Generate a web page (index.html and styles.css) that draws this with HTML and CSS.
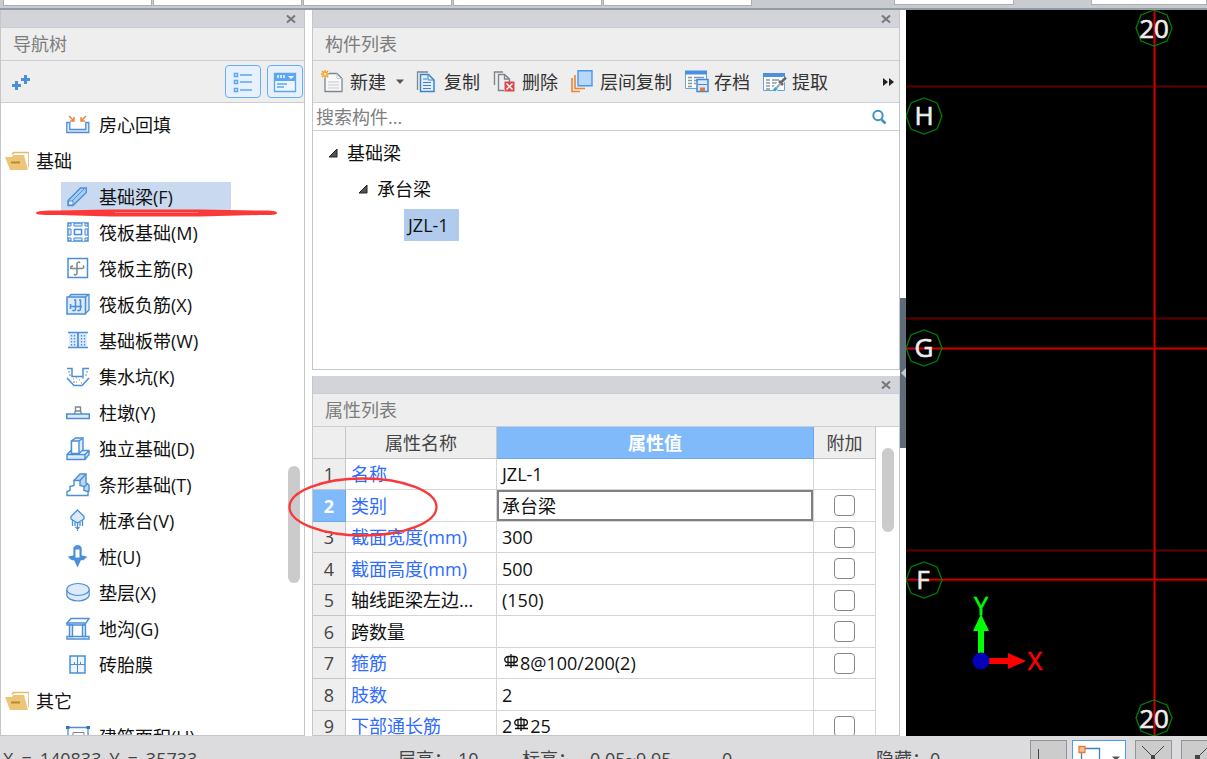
FILE: index.html
```html
<!DOCTYPE html>
<html lang="zh-CN">
<head>
<meta charset="utf-8">
<title>构件定义</title>
<link rel="stylesheet" href="styles.css">
</head>
<body>
<div class="app">
  <div class="tabstrip">
    <div class="tab"></div><div class="tab"></div><div class="tab"></div><div class="tab"></div><div class="tab"></div>
    <div class="tab tab-detached"></div>
    <div class="tab tab-last"></div>
  </div>

  <main class="workspace">
    <section class="panel nav">
      <div class="grip"><button class="close" aria-label="关闭导航树"><svg width="10" height="10" viewBox="0 0 10 10"><path d="M1 1.500L9 8.500M9 1.500L1 8.500"/></svg></button></div>
      <h2 class="title">导航树</h2>
      <div class="nav-tools">
        <button class="plain" aria-label="展开"><svg width="20" height="18" viewBox="0 0 20 18"><path d="M5.500 8v9M1 12.500h9M14.500 2v9M10 6.500h9" stroke="#4a8fd8" stroke-width="3" fill="none"/></svg></button>
        <div class="nav-modes">
          <button class="mode" aria-label="列表视图"><svg width="24" height="24" viewBox="0 0 24 24" fill="none" stroke="#5ba6f5"><path d="M3.500 3.500h3v3h-3zM3.500 10.500h3v3h-3zM3.500 18.500h3v3h-3z" stroke-width="1.500"/><path d="M9 5h12M9 12h12M9 20h12" stroke-width="1.700"/></svg></button>
          <button class="mode" aria-label="窗口视图"><svg width="24" height="24" viewBox="0 0 24 24"><path d="M1.500 3.500h21v18h-21z" fill="#edf5fe" stroke="#5ba6f5" stroke-width="1.300"/><path d="M1 3h22v8H1z" fill="#5ba6f5"/><path d="M5 5v3M8 5v3M11 5v3" stroke="#fff" stroke-width="1.500"/><path d="M15 6h6l-3 3z" fill="#fff"/><path d="M4 14h10M4 17h7" stroke="#5ba6f5" stroke-width="1.500"/></svg></button>
        </div>
      </div>
      <ul class="tree">
        <li><button class="node"><svg class="ico" viewBox="0 0 24 24"><path d="M.8 9.500h3v7h16v-7h3v10H.8z" fill="#dceafa" stroke="#4a8fd8" stroke-width="1.300"/><path d="M3 3l5 5M8 4v4H4M20 3l-5 5M15 4v4h4" stroke="#ef8340" fill="none" stroke-width="1.500"/></svg>房心回填</button></li>
        <li><button class="folder"><svg class="ico" viewBox="0 0 24 24"><path d="M7 5l2-1.500h15v15" fill="none" stroke="#e3bb6a" stroke-width="1.600"/><path d="M0 8h7l1-2h11l4 15H5z" fill="#eec577"/><path d="M6 13.500h9" stroke="#b58c35" stroke-width="2"/></svg>基础</button></li>
        <li><button class="node active"><svg class="ico" viewBox="0 0 24 24"><path d="M2 15.500L14.500 3h5.800v4.500L7 20.500H2z" fill="#a9cdf3" stroke="#4a8fd8" stroke-width="1.400"/><path d="M2.500 16H7v4H2.500z" fill="#e3effb" stroke="#4a8fd8"/><path d="M6 16L18 4" stroke="#4a8fd8" fill="none"/></svg>基础梁(F)</button></li>
        <li><button class="node"><svg class="ico" viewBox="0 0 24 24" fill="none" stroke="#4a8fd8"><path d="M2 2h20v18H2z" fill="#dceafa" stroke-width="1.500"/><path d="M6.500 2v18M17.500 2v18M2 6.500h20M2 15.500h20" stroke="#fff" stroke-width="2"/><path d="M5 2v3H2M19 2v3h3M5 20v-3H2M19 20v-3h3M8 2v3h8V2M8 20v-3h8v3M2 8h3v6H2M22 8h-3v6h3"/><path d="M8.500 8.500h7v5h-7z" fill="#fff" stroke-width="1.500"/></svg>筏板基础(M)</button></li>
        <li><button class="node"><svg class="ico" viewBox="0 0 24 24" fill="none"><path d="M2 1.500h19.500v19H2z" stroke="#4a8fd8" stroke-width="1.500"/><path d="M14 6c-1-1.600-3-1-3 1v9c0 2-2 2.500-3 1M5 12c-1-2 0-3 2-3M5 11.500h10c3 0 3.500-1.500 2-3" stroke="#7c8790" stroke-width="1.500"/></svg>筏板主筋(R)</button></li>
        <li><button class="node"><svg class="ico" viewBox="0 0 24 24" fill="#dceafa" stroke="#4a8fd8"><path d="M3 4l2-2.500h18V17l-3 3" stroke-width="1.300"/><path d="M1 4h18.500v17H1zM19.500 4l3-2.500" stroke-width="1.500"/><path d="M4 13.500h12M8 7h1.500v9c0 2-2 2-3 1M13 7h1.500v9c0 2-2 2-3 1M4.500 11v5" fill="none" stroke-width="1.500"/></svg>筏板负筋(X)</button></li>
        <li><button class="node"><svg class="ico" viewBox="0 0 24 24"><path d="M3 3h18v15H3z" fill="#dceafa"/><path d="M2 3.500h20M2 18.500h20M12 3v15" stroke="#4a8fd8" stroke-width="1.700"/><path d="M5.500 6v11M8.500 6v11M15.500 6v11M18.500 6v11" stroke="#4a8fd8" stroke-dasharray="1.500 1.500" stroke-width="1.300"/></svg>基础板带(W)</button></li>
        <li><button class="node"><svg class="ico" viewBox="0 0 24 24" fill="none"><path d="M1 3.500h5v8h11v-8h6M1 13l7 7.500h8l7-7.500" stroke="#4a8fd8" stroke-width="1.500"/><path d="M2 7h2M3 10h2M7 14h1M10 13h1M13 15h1M16 13h2M10 17h1M15 18h1M19 10h2M20 7h2M7 17h2" stroke="#7c8790"/></svg>集水坑(K)</button></li>
        <li><button class="node"><svg class="ico" viewBox="0 0 24 24" fill="#fff"><path d="M8.500 13l1-3V6h5v4l1 3M9 10h6" stroke="#7c8790" stroke-width="1.400"/><path d="M.8 13h22.500v4.500H.8z" fill="#dceafa" stroke="#4a8fd8" stroke-width="1.500"/></svg>柱墩(Y)</button></li>
        <li><button class="node"><svg class="ico" viewBox="0 0 24 24" fill="#dceafa" stroke="#4a8fd8" stroke-width="1.400"><path d="M1 17.500l4-4h18v4l-4 5H1zM1 17.500h18l4-4M19 17.500v5"/><path d="M5.500 4l4-3H17v12l-4 3.500H5.500z"/><path d="M5.500 4H13v12.500H5.500zM13 4l4-3" fill="#fff"/></svg>独立基础(D)</button></li>
        <li><button class="node"><svg class="ico" viewBox="0 0 24 24" stroke="#4a8fd8" stroke-width="1.400"><path d="M8 7.500L14 1h6v9l3 2v6l-4 4z" fill="#bdd5f0"/><path d="M1 22.500v-4l3-1v-4l4-1v-5h6v5l4 1v4l4 1v4z" fill="#fff"/><path d="M14 7.500L20 1M18 14l4-4" fill="none"/></svg>条形基础(T)</button></li>
        <li><button class="node"><svg class="ico" viewBox="0 0 24 24" fill="#dceafa" stroke="#4a8fd8" stroke-width="1.300"><path d="M11.500 1L18 7.500v2.500l-6.500 4L5 10V7.500z"/><path d="M6.500 11v6M16.500 11v6M9 13v4M14 13v4M11.500 14v8M9.500 18l2 2 2-2" fill="none"/></svg>桩承台(V)</button></li>
        <li><button class="node"><svg class="ico" viewBox="0 0 24 24" stroke="#4a8fd8" stroke-width="1.300"><path d="M8 3h7v8l5 1-3 2.500h-2.500l-3 6.500-3-6.500H6L3 12l5-1z" fill="#4a8fd8"/><path d="M8.500 3c0-3 6-3 6 0z" fill="#6fa8e4"/><path d="M9.500 4.500h4v8h-4z" fill="#fff" stroke="none"/></svg>桩(U)</button></li>
        <li><button class="node"><svg class="ico" viewBox="0 0 24 24" fill="#dceafa" stroke="#4a8fd8" stroke-width="1.200"><path d="M.8 9v5c0 3 5 6 11.200 6s11.200-3 11.200-6V9"/><ellipse cx="12" cy="8.500" rx="11.200" ry="6"/></svg>垫层(X)</button></li>
        <li><button class="node"><svg class="ico" viewBox="0 0 24 24" fill="#fff" stroke="#4a8fd8" stroke-width="1.400"><path d="M1 6l4-4.500h18L20 6zM1 6h18v2H1zM1 19.500h22V22H1z"/><path d="M3.500 8h3v11.500h-3zM16.500 8h3v11.500h-3z" fill="#dceafa"/></svg>地沟(G)</button></li>
        <li><button class="node"><svg class="ico" viewBox="0 0 24 24" fill="#eef5fd" stroke="#4a8fd8"><path d="M4 3h15v17H4z" stroke-width="1.500"/><path d="M11.500 3v17M4 11.500h15M8.500 9v3M14.500 9v3"/></svg>砖胎膜</button></li>
        <li><button class="folder"><svg class="ico" viewBox="0 0 24 24"><path d="M7 5l2-1.500h15v15" fill="none" stroke="#e3bb6a" stroke-width="1.600"/><path d="M0 8h7l1-2h11l4 15H5z" fill="#eec577"/><path d="M6 13.500h9" stroke="#b58c35" stroke-width="2"/></svg>其它</button></li>
        <li><button class="node"><svg class="ico" viewBox="0 0 24 24" fill="none"><path d="M2 1v22M22 1v22M1 2.500h22" stroke="#4a8fd8" stroke-width="1.300"/><path d="M0 1h3.500v3H0zM20.500 1H24v3h-3.500z" fill="#3c72ad"/><path d="M7 7.500h11v9H7z" stroke="#7c8790"/></svg>建筑面积(U)</button></li>
      </ul>
      <div class="thumb thumb-nav"></div>
    </section>

    <div class="center">
      <section class="panel">
        <div class="grip"><button class="close" aria-label="关闭构件列表"><svg width="10" height="10" viewBox="0 0 10 10"><path d="M1 1.500L9 8.500M9 1.500L1 8.500"/></svg></button></div>
        <h2 class="title">构件列表</h2>
        <div class="toolbar">
          <button class="tool tool-menu"><svg class="ico" viewBox="0 0 24 24"><path d="M4 3.500h12l5 5v13H4z" fill="#f8f8f8" stroke="#7c8790" stroke-width="1.300"/><path d="M16 3.500v5h5M7 12h11M7 15h11M7 18h11" stroke="#c5cbd1" fill="none"/><path d="M0 0h8v8H0z" fill="#eee"/><path d="M4 0v8M0 4h8M1 1l6 6M7 1L1 7" stroke="#f59b23" stroke-width="1.500"/><circle cx="4" cy="4" r="1.500" fill="#fff1b0"/></svg>新建<svg width="14" height="8" viewBox="0 0 14 8"><path d="M5 1.500h8l-4 4.500z" fill="#555"/></svg></button>
          <button class="tool"><svg class="ico" viewBox="0 0 24 24" fill="none"><path d="M2.500 20V2H13" stroke="#7c8790" stroke-width="1.300"/><path d="M5.500 4.500h8l5.500 5.500v11.500H5.500z" fill="#e5f0fc" stroke="#3d82d2" stroke-width="1.500"/><path d="M13 4.500V10h6M8 9h4M8 12.500h8M8 15.500h8M8 18.500h8" stroke="#3d82d2"/></svg>复制</button>
          <button class="tool"><svg class="ico" viewBox="0 0 24 24" fill="none"><path d="M1.500 15V2H10M11 20.500H5.500v-16h6l5 4.500v3M11.500 4.500V9h5" stroke="#7c8790" stroke-width="1.400"/><path d="M11.500 11.500h10v10h-10z" fill="#d9494d"/><path d="M13.500 13.500l6 6M19.500 13.500l-6 6" stroke="#fff" stroke-width="1.400"/></svg>删除</button>
          <button class="tool"><svg class="ico" viewBox="0 0 24 24" fill="none"><path d="M1 8v13.500h8M4 5v13.500h10" stroke="#ee8335" stroke-width="1.600"/><path d="M7 .8h14v15H7z" fill="#b8d8fa" stroke="#4a96ea" stroke-width="1.400"/></svg>层间复制</button>
          <button class="tool"><svg class="ico" viewBox="0 0 24 24" fill="none"><path d="M.5 1.500h21v17H.5z" fill="#fafcfe" stroke="#6aa1de"/><path d="M0 .5h22v4H0z" fill="#4a8fe0"/><path d="M3 7.500h4M9 7.500h10M3 10.500h4M9 10.500h3M3 13.500h4M9 13.500h2M3 16.500h4" stroke="#8c969f" stroke-width="1.300"/><path d="M12 9.500h11v12H12z" fill="#d9eafc" stroke="#3f88da" stroke-width="1.500"/><path d="M13 14.500h9" stroke="#3f88da"/><path d="M15 17.500h5v3.500h-5z" fill="#ee7529"/></svg>存档</button>
          <button class="tool"><svg class="ico" viewBox="0 0 24 24" fill="none"><path d="M.5 3.500h21v17H.5z" fill="#fafcfe" stroke="#6aa1de"/><path d="M0 3h22v4H0z" fill="#4a8fe0"/><path d="M3 10h4M9 10h7M3 13h4M9 13h5M3 16h4M9 16h3M3 19h4" stroke="#8c969f" stroke-width="1.300"/><path d="M22 8l-6 6M11 20l6-7" stroke="#fff" stroke-width="5"/><path d="M23 7.500l-5 5M16 11l4 4" stroke="#666" stroke-width="2.500"/><path d="M17.500 13.500l-5 5.500" stroke="#9ab" stroke-width="2"/><path d="M13.500 18L11 20.500" stroke="#20b4cc" stroke-width="3"/></svg>提取</button>
          <button class="plain more" aria-label="更多"><svg width="12" height="10" viewBox="0 0 12 10"><path d="M0 1l5 4-5 4zM6 1l5 4-5 4z" fill="#222"/></svg></button>
        </div>
        <div class="search">
          <input type="text" placeholder="搜索构件..." aria-label="搜索构件">
          <button class="plain" aria-label="搜索"><svg width="16" height="16" viewBox="0 0 16 16" fill="none" stroke="#4593c4"><circle cx="7" cy="6.500" r="4.700" stroke-width="2"/><path d="M10.500 10.500l4 4" stroke-width="2.600"/></svg></button>
        </div>
        <ul class="parts">
          <li class="part level1"><svg width="10" height="10" viewBox="0 0 10 10"><path d="M9 1v8H1z" fill="#555" stroke="#222"/></svg>基础梁</li>
          <li class="part level2"><svg width="10" height="10" viewBox="0 0 10 10"><path d="M9 1v8H1z" fill="#555" stroke="#222"/></svg>承台梁</li>
          <li class="part level3"><span class="picked">JZL-1</span></li>
        </ul>
      </section>

      <section class="panel">
        <div class="grip"><button class="close" aria-label="关闭属性列表"><svg width="10" height="10" viewBox="0 0 10 10"><path d="M1 1.500L9 8.500M9 1.500L1 8.500"/></svg></button></div>
        <h2 class="title">属性列表</h2>
        <div class="props-wrap">
          <table class="props">
            <colgroup><col class="c-num"><col class="c-name"><col><col class="c-add"></colgroup>
            <thead><tr><th></th><th>属性名称</th><th class="hot">属性值</th><th>附加</th></tr></thead>
            <tbody>
              <tr><th>1</th><td class="key">名称</td><td>JZL-1</td><td></td></tr>
              <tr><th class="hot">2</th><td class="key">类别</td><td class="editing">承台梁</td><td class="tick"><input type="checkbox" aria-label="附加 类别"></td></tr>
              <tr><th>3</th><td class="key">截面宽度(mm)</td><td>300</td><td class="tick"><input type="checkbox" aria-label="附加 截面宽度"></td></tr>
              <tr><th>4</th><td class="key">截面高度(mm)</td><td>500</td><td class="tick"><input type="checkbox" aria-label="附加 截面高度"></td></tr>
              <tr><th>5</th><td>轴线距梁左边...</td><td>(150)</td><td class="tick"><input type="checkbox" aria-label="附加 轴线距梁左边"></td></tr>
              <tr><th>6</th><td>跨数量</td><td></td><td class="tick"><input type="checkbox" aria-label="附加 跨数量"></td></tr>
              <tr><th>7</th><td class="key">箍筋</td><td><svg class="rebar" viewBox="0 0 18 16"><path d="M9 0v14M6 3v8M12 3v8M3 11.500h13M6.500 2.500h5.500c4.500 0 4.500 6 0 6H6.500c-5 0-5-6 0-6"/></svg>8@100/200(2)</td><td class="tick"><input type="checkbox" aria-label="附加 箍筋"></td></tr>
              <tr><th>8</th><td class="key">肢数</td><td>2</td><td></td></tr>
              <tr><th>9</th><td class="key">下部通长筋</td><td>2<svg class="rebar" viewBox="0 0 18 16"><path d="M9 0v14M6 3v8M12 3v8M3 11.500h13M6.500 2.500h5.500c4.500 0 4.500 6 0 6H6.500c-5 0-5-6 0-6"/></svg>25</td><td class="tick"><input type="checkbox" aria-label="附加 下部通长筋"></td></tr>
            </tbody>
          </table>
          <div class="thumb thumb-props"></div>
        </div>
      </section>
    </div>

    <div class="splitter"><button class="handle" aria-label="收起面板"><svg width="6" height="10" viewBox="0 0 6 10"><path d="M6 0v10L1 5z" fill="#c3c9ce"/></svg></button></div>

    <svg class="canvas" role="img" aria-label="轴网">
      <defs><path id="bubble" d="M0-18L13-13 18 0 13 13 0 18-13 13-18 0-13-13z"/></defs>
      <g class="axis-dim"><path d="M0 76.500h3000M0 308.500h3000M0 540.500h3000"/></g>
      <g class="axis-halo"><path d="M0 338.500h3000M0 570h3000M248.500 0v726"/></g>
      <g class="axis"><path d="M0 338.500h3000M0 569.500h3000M248.500 0v726"/></g>
      <g class="bubbles">
        <use href="#bubble" x="248" y="18"/><use href="#bubble" x="18" y="106"/><use href="#bubble" x="18" y="338"/><use href="#bubble" x="18" y="570"/><use href="#bubble" x="248" y="708"/>
      </g>
      <g class="axis-names">
        <text x="248" y="28">20</text><text x="18" y="115">H</text><text x="18" y="347">G</text><text x="17" y="579">F</text><text x="248" y="718">20</text>
      </g>
      <path d="M72 646v-25h-5l8-17 8 17h-5v25z" fill="#0f0"/>
      <path d="M82 648h20v-5l18 8-18 8v-5H82z" fill="#f00"/>
      <circle cx="75" cy="651" r="8.500" fill="#0000b8"/>
      <text class="ucs" x="75" y="605" fill="#0f0" stroke="#0f0">Y</text>
      <text class="ucs" x="129" y="660" fill="#f00" stroke="#f00">X</text>
    </svg>
  </main>

  <footer class="status">
    <div class="readout coords"><span>X</span><span>=</span><span>140833</span><span>Y</span><span>=</span><span>35733</span></div>
    <div class="readout height"><span>层高：</span><span>10</span></div>
    <div class="readout level"><span>标高：</span><span>0.05~9.95</span></div>
    <div class="readout count"><span>0</span></div>
    <div class="readout hidden-count"><span>隐藏：</span><span>0</span></div>
    <div class="snaps">
      <button class="snap" aria-label="正交"><svg width="35" height="34" viewBox="0 0 35 34"><path d="M7.500 8v20h20" fill="none" stroke="#444"/></svg></button>
      <button class="snap snap-on" aria-label="捕捉"><svg width="52" height="34" viewBox="0 0 52 34"><path d="M8.500 7.500h18v18h-18z" fill="none" stroke="#3d82d2" stroke-width="1.300"/><path d="M6 5.500h6v6H6z" fill="#f9bd90" stroke="#e67f35" stroke-width="1.300"/><path d="M39 15.500h8l-4 4z" fill="#555"/></svg></button>
      <button class="snap" aria-label="交点"><svg width="35" height="34" viewBox="0 0 35 34"><path d="M6 5l22 22M28 5L6 27" stroke="#444"/><path d="M15 14h4v4h-4z" fill="#444"/></svg></button>
      <button class="snap" aria-label="垂点"><svg width="35" height="34" viewBox="0 0 35 34"><path d="M28 4L6 26" stroke="#444"/><path d="M13 14h5v5h-5z" fill="#444"/></svg></button>
    </div>
  </footer>

  <svg class="markup" aria-hidden="true">
    <path d="M36 213C36 211 44 210.500 60 210.500L110 209.500H200L260 210.500C272 210.500 277 211 277 213S272 215 260 215L200 216.500H110L60 215C44 215 36 215 36 213z" fill="#fb3838"/>
    <path d="M115 212.500h83" stroke="#ff7474"/>
    <ellipse cx="363" cy="507" rx="73.500" ry="28.500" fill="none" stroke="#fb3838" stroke-width="2.300"/>
  </svg>
</div>
</body>
</html>
```
FILE: styles.css
```css
* { box-sizing: border-box; }

body {
  margin: 0;
  font: 18px/24px "Open Sans", "Noto Sans CJK SC", sans-serif;
  color: #111;
  background: #fff;
}

button {
  margin: 0;
  padding: 0;
  border: 0;
  background: none;
  font: inherit;
  color: inherit;
  text-align: left;
}

svg { display: block; flex: none; }
ul { list-style: none; margin: 0; padding: 0; }

.app {
  position: relative;
  display: flex;
  flex-direction: column;
  height: 100vh;
  overflow: hidden;
}

/* Tab strip */
.tabstrip {
  display: flex;
  flex: none;
  align-items: flex-start;
  gap: 1px;
  height: 10px;
  padding-left: 3px;
  background: #c8cbd0;
  border-bottom: 2px solid #929ba3;
}
.tab {
  flex: none;
  width: 149px;
  height: 6px;
  background: #fff;
  border: solid #aeaeb0;
  border-width: 0 1px 1px;
}
.tab-detached { width: 120px; height: 5px; margin-left: 141px; }
.tab-last { flex: 1; height: 5px; margin-left: 76px; }

.workspace { display: flex; flex: 1; min-height: 0; }

/* Panels */
.panel {
  position: relative;
  display: flex;
  flex: 1;
  flex-direction: column;
  min-height: 0;
  border: 1px solid #c3c6ca;
  border-top: 0;
  background: #fff;
}
.grip {
  display: flex;
  flex: none;
  align-items: center;
  justify-content: flex-end;
  height: 18px;
  padding: 1px 8px 0 0;
  background: #d3d4d9;
  border-bottom: 1px solid #cbcdd2;
}
.close svg { fill: none; stroke: #777; stroke-width: 2; }
.title {
  flex: none;
  height: 33px;
  margin: 0;
  padding: 4px 12px;
  font-size: 18px;
  font-weight: 400;
  color: #7c7c7c;
  background: #eee;
  border-bottom: 1px solid #cbced4;
}
.ico { width: 24px; height: 24px; }
.thumb { position: absolute; width: 12px; border-radius: 6px; background: #cbcbcb; }

/* Navigation tree */
.nav { flex: none; width: 305px; margin-right: 7px; }
.nav-tools {
  display: flex;
  flex: none;
  align-items: center;
  justify-content: space-between;
  height: 42px;
  padding: 0 1px 0 10px;
  background: #eee;
  border-bottom: 1px solid #cbced4;
}
.nav-modes { display: flex; gap: 6px; }
.mode {
  display: grid;
  place-items: center;
  width: 36px;
  height: 33px;
  border: 1px solid #66aef8;
  border-radius: 4px;
  background: #e6f1fd;
}
.tree { flex: 1; min-height: 0; padding-top: 4px; overflow: hidden; }
.tree li { display: flex; align-items: center; height: 36px; }
.node, .folder { display: flex; align-items: center; height: 30px; }
.node { gap: 9px; width: 170px; margin-left: 60px; padding-left: 5px; white-space: nowrap; }
.folder { gap: 7px; margin-left: 4px; }
.active { background: #c8d9f0; }
.thumb-nav { top: 456px; right: 4px; height: 117px; }

/* Component list */
.center { display: flex; flex: 0 1 588px; flex-direction: column; gap: 6px; min-width: 0; }
.toolbar {
  display: flex;
  flex: none;
  align-items: center;
  gap: 10px;
  height: 42px;
  padding: 0 4px 0 8px;
  background: #eee;
  border-bottom: 1px solid #cbced4;
  color: #333;
}
.tool { display: flex; flex: none; align-items: center; gap: 5px; padding-right: 3px; }
.tool-menu { padding-right: 0; }
.more { margin-left: auto; }
.search {
  display: flex;
  flex: none;
  align-items: center;
  height: 28px;
  padding: 0 12px 0 3px;
  border-bottom: 1px solid #cbced4;
}
.search input {
  flex: 1;
  min-width: 0;
  padding: 0;
  border: 0;
  outline: 0;
  font: inherit;
}
.search input::placeholder { color: #808080; opacity: 1; }
.parts { padding-top: 4px; }
.part { display: flex; align-items: center; gap: 9px; height: 36px; }
.level1 { padding-left: 15px; }
.level2 { padding-left: 45px; }
.level3 { padding-left: 91px; }
.picked { min-width: 55px; padding: 4px; background: #b1cbec; }

/* Property table */
.props-wrap { position: relative; flex: 1; min-height: 0; overflow: hidden; padding-right: 23px; }
.props {
  width: 100%;
  table-layout: fixed;
  border-collapse: separate;
  border-spacing: 0;
}
.c-num { width: 33px; }
.c-name { width: 151px; }
.c-add { width: 62px; }
.props tr { height: 31px; }
.props tbody tr:nth-child(4n+2), .props thead tr { height: 32px; }
.props tbody tr:nth-child(4n) { height: 32px; }
.props th, .props td {
  padding: 0 5px;
  line-height: 24px;
  white-space: nowrap;
  overflow: hidden;
  border: solid #d4d4d4;
  border-width: 0 1px 1px 0;
}
.props th {
  padding: 0;
  font-weight: 400;
  color: #444;
  background: #eee;
  border-color: #c6c6c6;
}
.props .key { color: #2e6bff; }
.props .hot { color: #fff; font-weight: 700; background: #80bafa; border-color: #6ba9ee; }
.props .editing { box-shadow: inset 0 0 0 2px #808080; }
.props .tick { padding: 0; text-align: center; }
.tick input {
  appearance: none;
  display: block;
  width: 21px;
  height: 21px;
  margin: 0 auto;
  border: 1px solid #888;
  border-radius: 4px;
  background: #fff;
}
.rebar {
  display: inline-block;
  width: 18px;
  height: 16px;
  vertical-align: 0;
  fill: none;
  stroke: #111;
  stroke-width: 1.3;
}
.thumb-props { top: 21px; right: 5px; height: 84px; }

/* Splitter */
.splitter { display: flex; flex: none; align-items: center; width: 6px; }
.handle { display: grid; place-items: center; width: 6px; height: 150px; background: #5f6b76; }

/* Drawing area */
.canvas { flex: 1 1 0; width: 0; min-width: 0; height: 100%; background: #000; }
.axis-dim { stroke: #5c0000; stroke-width: 2; }
.axis-halo { stroke: #700000; stroke-width: 3; }
.axis { stroke: #d00000; stroke-width: 1; }
.bubbles { fill: none; stroke: #008000; stroke-width: 1.3; }
.axis-names { font-size: 26px; fill: #eee; stroke: #eee; stroke-width: 0.6; text-anchor: middle; }
.ucs { font-size: 25px; stroke-width: 0.6; text-anchor: middle; }

/* Status bar */
.status {
  display: flex;
  flex: none;
  align-items: flex-start;
  height: 23px;
  overflow: hidden;
  background: #dcdcde;
  color: #444;
}
.readout { display: flex; flex: none; padding-top: 11px; white-space: nowrap; }
.coords { gap: 8px; width: 398px; padding-left: 3px; }
.height { gap: 6px; width: 124px; }
.level { gap: 14px; width: 200px; }
.count { width: 154px; }
.hidden-count { flex: 1; }
.snaps { display: flex; flex: none; gap: 9px; width: 177px; padding-top: 4px; }
.snap { flex: none; height: 36px; width: 37px; border: 1px solid #949494; background: #ccc; }
.snap-on { width: 54px; margin-left: -4px; border: 1px solid #4a9df0; background: #fff; }

/* Review marks drawn over the panels */
.markup { position: absolute; inset: 0; width: 100%; height: 100%; pointer-events: none; }
```
